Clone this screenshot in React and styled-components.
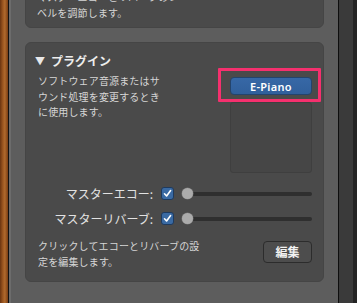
import styled, { createGlobalStyle } from "styled-components";

const GlobalStyle = createGlobalStyle`
  html, body {
    margin: 0;
    padding: 0;
    background: #5c5c5c;
  }
  body {
    font-family: "Noto Sans CJK JP", "Noto Sans", sans-serif;
  }
`;

const Frame = styled.div`
  display: flex;
  width: 357px;
  height: 303px;
  overflow: hidden;
`;

const Wood = styled.div`
  width: 8px;
  background: linear-gradient(90deg, #6a3410, #9a551f 35%, #b06a2d 60%, #7a3d13);
`;

const Edge = styled.div`
  width: 1px;
  background: #111;
`;

const Bevel = styled.div`
  width: 2px;
  background: #6c6c6c;
`;

const Inspector = styled.div`
  flex: 1;
  display: flex;
  flex-direction: column;
  gap: 14px;
  padding: 0 14px;
  background: #5d5d5d;
`;

const Side = styled.div`
  width: 14px;
  background: #3a3a3a;
  border-left: 1px solid #0e0e0e;
`;

const SideDark = styled.div`
  width: 4px;
  background: #242424;
`;

const Card = styled.section`
  background: #4a4a4a;
  border: 1px solid #454545;
  border-radius: 6px;
  padding: ${(p) => p.$pad};
  margin-top: ${(p) => p.$top || "0"};
`;

const Text = styled.p`
  margin: 0;
  font-size: 10px;
  line-height: 15.5px;
  color: #d6d6d6;
  letter-spacing: 0.15px;
`;

const Heading = styled.h3`
  margin: 0 0 4px -3px;
  display: flex;
  align-items: center;
  gap: 6px;
  font-size: 12px;
  font-weight: 700;
  color: #ededed;
  line-height: 16px;
`;

const Triangle = styled.span`
  font-size: 10px;
  color: #e8e8e8;
`;

const Body = styled.div`
  display: flex;
  justify-content: space-between;
`;

const PluginColumn = styled.div`
  position: relative;
  width: 82px;
  display: flex;
  flex-direction: column;
  gap: 7px;
  padding-top: 4px;
`;

const Highlight = styled.div`
  position: absolute;
  left: -12px;
  top: -5px;
  width: 97px;
  height: 28px;
  border: 3px solid #f5306e;
  border-radius: 1px;
  pointer-events: none;
`;

const PluginButton = styled.button`
  height: 18px;
  padding: 0;
  border: 1px solid #24446c;
  border-radius: 4px;
  background: linear-gradient(#3768a6, #30609c);
  color: #fff;
  font-family: "Noto Sans", sans-serif;
  font-size: 11px;
  font-weight: 600;
  letter-spacing: 0.3px;
`;

const Well = styled.div`
  height: 69px;
  background: #464646;
  border: 1px solid #3f3f3f;
  border-radius: 3px;
`;

const Controls = styled.div`
  display: grid;
  grid-template-columns: 115px 13px 1fr;
  column-gap: 8px;
  row-gap: 12px;
  align-items: center;
  margin-top: 14px;
`;

const Label = styled.span`
  text-align: right;
  font-size: 12px;
  line-height: 13px;
  color: #e2e2e2;
`;

const Check = styled.span`
  width: 11px;
  height: 11px;
  display: grid;
  place-items: center;
  background: #3a6aa3;
  border: 1px solid #1e3a5e;
  border-radius: 3px;
`;

const Slider = styled.div`
  position: relative;
  height: 13px;
  display: flex;
  align-items: center;
`;

const Track = styled.div`
  flex: 1;
  height: 4px;
  margin-left: 5px;
  background: #2f2f2f;
  border-radius: 2px;
`;

const Knob = styled.span`
  position: absolute;
  left: 0;
  top: 1px;
  width: 11px;
  height: 11px;
  border-radius: 50%;
  background: #ababab;
  box-shadow: 0 0 0 0.5px #777;
`;

const Footer = styled.div`
  display: flex;
  justify-content: space-between;
  align-items: center;
  margin-top: 13px;
`;

const EditButton = styled.button`
  width: 49px;
  height: 22px;
  padding: 0;
  background: #4d4d4d;
  border: 1px solid #2c2c2c;
  border-radius: 4px;
  color: #f2f2f2;
  font-family: "Noto Sans CJK JP", sans-serif;
  font-size: 12px;
  font-weight: 700;
  margin-top: -4px;
`;

const CheckMark = () => (
  <svg width="9" height="9" viewBox="0 0 9 9">
    <path d="M1.5 4.8 L3.6 7 L7.6 1.6" fill="none" stroke="#fff" strokeWidth="1.6" strokeLinecap="round" strokeLinejoin="round" />
  </svg>
);

const SliderRow = ({ label }) => (
  <>
    <Label>{label}</Label>
    <Check>
      <CheckMark />
    </Check>
    <Slider>
      <Track />
      <Knob />
    </Slider>
  </>
);

export default function App() {
  return (
    <>
      <GlobalStyle />
      <Frame>
        <Wood />
        <Edge />
        <Bevel />
        <Inspector>
          <Card $pad="0 12px 7px 11px" $top="-12px">
            <Text>
              マスターエコーとリバーブのレ
              <br />
              ベルを調節します。
            </Text>
          </Card>
          <Card $pad="10px 11px 12px 12px">
            <Heading>
              <Triangle>▼</Triangle>
              プラグイン
            </Heading>
            <Body>
              <Text>
                ソフトウェア音源またはサ
                <br />
                ウンド処理を変更するとき
                <br />
                に使用します。
              </Text>
              <PluginColumn>
                <PluginButton>E-Piano</PluginButton>
                <Well />
                <Highlight />
              </PluginColumn>
            </Body>
            <Controls>
              <SliderRow label="マスターエコー:" />
              <SliderRow label="マスターリバーブ:" />
            </Controls>
            <Footer>
              <Text>
                クリックしてエコーとリバーブの設
                <br />
                定を編集します。
              </Text>
              <EditButton>編集</EditButton>
            </Footer>
          </Card>
        </Inspector>
        <Side />
        <SideDark />
      </Frame>
    </>
  );
}
